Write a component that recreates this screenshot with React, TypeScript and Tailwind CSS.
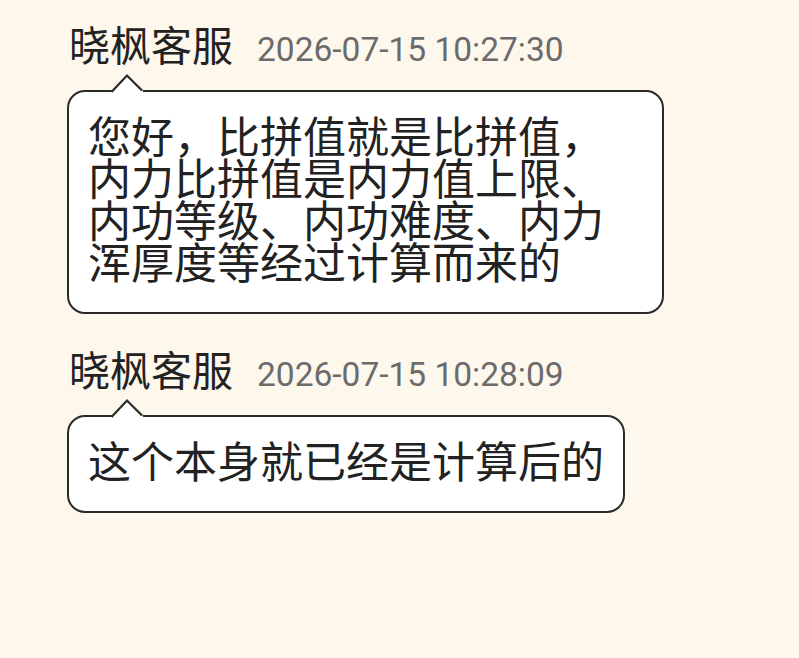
import React from "react";

const cjk = { fontFamily: '"Noto Sans CJK SC", "Noto Sans", sans-serif' };
const latin = { fontFamily: 'Roboto, "Noto Sans CJK SC", sans-serif' };

function Tail() {
  return (
    <svg
      className="absolute left-[41px] top-[-19px]"
      width="34"
      height="22"
      viewBox="0 0 34 22"
    >
      <path d="M0 20 L17 2 L33 18 L33 22 L0 22 Z" fill="#ffffff" />
      <path d="M1.5 19 L17 2.5 L32 17.5" fill="none" stroke="#2a2a2a" strokeWidth="2.2" />
    </svg>
  );
}

function Message({ time, lines, width }: { time: string; lines: string[]; width?: string }) {
  return (
    <div className="flex flex-col items-start">
      <div className="flex items-baseline gap-[24px] pl-[2px]">
        <span className="text-[41px] leading-[48px] text-[#222222]" style={cjk}>
          晓枫客服
        </span>
        <span className="text-[33.5px] leading-[48px] text-[#6b6b6b]" style={latin}>
          {time}
        </span>
      </div>
      <div
        className={`relative mt-[16px] rounded-[18px] border-2 border-[#2a2a2a] bg-white pl-[19px] pr-[19px] pt-[21px] pb-[31px] ${width ?? ""}`}
      >
        <Tail />
        <div className="text-[43px] leading-[42px] text-[#222222]" style={cjk}>
          {lines.map((l, i) => (
            <div key={i} className="whitespace-nowrap">
              {l}
            </div>
          ))}
        </div>
      </div>
    </div>
  );
}

export default function App() {
  return (
    <div className="min-h-[658px] w-[799px] bg-[#fef7ec] pl-[67px] pt-[19px]">
      <div className="flex flex-col gap-[30px]">
        <Message
          time="2026-07-15 10:27:30"
          width="w-[597px]"
          lines={[
            "您好，比拼值就是比拼值，",
            "内力比拼值是内力值上限、",
            "内功等级、内功难度、内力",
            "浑厚度等经过计算而来的",
          ]}
        />
        <Message time="2026-07-15 10:28:09" lines={["这个本身就已经是计算后的"]} />
      </div>
    </div>
  );
}
